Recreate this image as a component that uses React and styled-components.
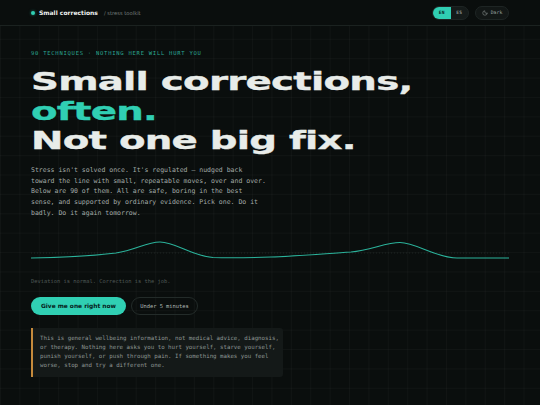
import React from 'react';
import styled, { createGlobalStyle } from 'styled-components';
import { Moon } from 'lucide-react';

const TEAL = '#30cfb3';
const MONO = '"DejaVu Sans Mono", "Liberation Mono", monospace';
const SANS = '"DejaVu Sans", "Noto Sans", sans-serif';

const GlobalStyle = createGlobalStyle`
  html, body {
    margin: 0;
    padding: 0;
    background: #0a0e0d;
  }
  #root {
    height: 405px;
    overflow: hidden;
  }
`;

const Page = styled.div`
  height: 405px;
  background-color: #0a0e0d;
  background-image:
    linear-gradient(rgba(255, 255, 255, 0.028) 1px, transparent 1px),
    linear-gradient(90deg, rgba(255, 255, 255, 0.028) 1px, transparent 1px);
  background-size: 19.4px 19.4px;
  color: #e8ece9;
`;

const Header = styled.header`
  height: 26px;
  box-sizing: border-box;
  border-bottom: 1px solid #1b2220;
  background: #0a0e0d;
  display: flex;
  align-items: center;
  justify-content: space-between;
  padding: 0 31px;
`;

const Brand = styled.div`
  display: flex;
  align-items: center;
  gap: 4px;
`;

const Dot = styled.span`
  width: 4px;
  height: 4px;
  border-radius: 50%;
  background: ${TEAL};
  box-shadow: 0 0 3px rgba(48, 207, 179, 0.6);
`;

const BrandName = styled.span`
  font-family: ${SANS};
  font-weight: 700;
  font-size: 6px;
  color: #eef2f0;
  margin-right: 2px;
`;

const BrandSub = styled.span`
  font-family: ${SANS};
  font-size: 5.2px;
  color: #737c79;
`;

const Controls = styled.div`
  display: flex;
  align-items: center;
  gap: 6px;
`;

const Toggle = styled.div`
  display: flex;
  height: 14px;
  border-radius: 7px;
  background: #151b1a;
  border: 1px solid #1e2524;
  box-sizing: border-box;
  overflow: hidden;
`;

const LangButton = styled.span`
  width: 17.5px;
  display: flex;
  align-items: center;
  justify-content: center;
  font-family: ${MONO};
  font-weight: 700;
  font-size: 4.6px;
  letter-spacing: 0.3px;
  color: ${p => (p.$active ? '#06201b' : '#8a9390')};
  background: ${p => (p.$active ? TEAL : 'transparent')};
`;

const ThemeButton = styled.span`
  height: 14px;
  width: 34px;
  box-sizing: border-box;
  border-radius: 7px;
  border: 1px solid #1e2524;
  background: #121716;
  display: flex;
  align-items: center;
  justify-content: center;
  gap: 3px;
  font-family: ${MONO};
  font-size: 4.8px;
  color: #9aa3a0;
`;

const Main = styled.main`
  padding: 23px 31px 0;
`;

const Eyebrow = styled.div`
  font-family: ${MONO};
  font-size: 5.5px;
  line-height: 8px;
  letter-spacing: 0.75px;
  color: #2aa892;
  text-transform: uppercase;
`;

const Headline = styled.h1`
  margin: 10px 0 0;
  font-family: ${SANS};
  font-weight: 700;
  font-size: 25px;
  line-height: 29.5px;
  letter-spacing: -0.5px;
  color: #e8ece9;
  -webkit-text-stroke: 0.35px currentColor;
  transform: scaleX(1.55);
  transform-origin: left top;
  white-space: nowrap;
`;

const Line = styled.span`
  display: block;
  color: ${p => (p.$accent ? TEAL : 'inherit')};
`;

const Lead = styled.p`
  margin: 9.5px 0 0;
  max-width: 60.5ch;
  font-family: ${MONO};
  font-size: 6.5px;
  line-height: 10.7px;
  color: #a2aaa7;
`;

const Wave = styled.svg`
  display: block;
  margin-top: 15px;
  width: 478px;
  height: 28px;
`;

const Caption = styled.div`
  margin-top: 15px;
  font-family: ${MONO};
  font-size: 5.4px;
  line-height: 8px;
  color: #4f5856;
`;

const Actions = styled.div`
  display: flex;
  gap: 5px;
  margin-top: 12px;
`;

const PrimaryButton = styled.button`
  height: 18px;
  width: 95px;
  border: none;
  border-radius: 9px;
  background: ${TEAL};
  color: #06201b;
  font-family: ${SANS};
  font-weight: 700;
  font-size: 5.9px;
  padding: 0;
  cursor: pointer;
`;

const GhostButton = styled.button`
  height: 18px;
  width: 67px;
  box-sizing: border-box;
  border: 1px solid #232b29;
  border-radius: 9px;
  background: transparent;
  color: #b0b8b5;
  font-family: ${MONO};
  font-size: 5.4px;
  padding: 0;
  cursor: pointer;
`;

const Notice = styled.div`
  margin-top: 13px;
  width: fit-content;
  box-sizing: border-box;
  border-left: 2px solid #c58a3c;
  border-radius: 0 3px 3px 0;
  background: #141918;
  padding: 6px 1px 6px 7px;
`;

const NoticeText = styled.p`
  margin: 0;
  width: 70ch;
  font-family: ${MONO};
  font-size: 5.75px;
  line-height: 9.3px;
  color: #8e9794;
`;

export default function App() {
  return (
    <Page>
      <GlobalStyle />
      <Header>
        <Brand>
          <Dot />
          <BrandName>Small corrections</BrandName>
          <BrandSub>/ stress toolkit</BrandSub>
        </Brand>
        <Controls>
          <Toggle>
            <LangButton $active>EN</LangButton>
            <LangButton>ES</LangButton>
          </Toggle>
          <ThemeButton>
            <Moon size={6} strokeWidth={2} />
            Dark
          </ThemeButton>
        </Controls>
      </Header>
      <Main>
        <Eyebrow>90 techniques · nothing here will hurt you</Eyebrow>
        <Headline>
          <Line>Small corrections,</Line>
          <Line $accent>often.</Line>
          <Line>Not one big fix.</Line>
        </Headline>
        <Lead>
          Stress isn't solved once. It's regulated — nudged back toward the line with small,
          repeatable moves, over and over. Below are 90 of them. All are safe, boring in the best
          sense, and supported by ordinary evidence. Pick one. Do it badly. Do it again tomorrow.
        </Lead>
        <Wave viewBox="0 0 478 28" preserveAspectRatio="none">
          <line x1="0" y1="19" x2="478" y2="19" stroke="#2a3331" strokeWidth="0.6" strokeDasharray="1 2" />
          <path
            d="M0,24 C30,23.5 60,22 85,19 C105,16 115,8 129,8 C145,8 160,22 182,23.5 C200,24 225,23.5 240,23 C260,22.5 290,20 320,18 C340,16 355,8.5 369,8.5 C385,8.5 405,24 426,24 L478,24"
            fill="none"
            stroke="#2bb39b"
            strokeWidth="1.1"
            strokeLinecap="round"
          />
        </Wave>
        <Caption>Deviation is normal. Correction is the job.</Caption>
        <Actions>
          <PrimaryButton>Give me one right now</PrimaryButton>
          <GhostButton>Under 5 minutes</GhostButton>
        </Actions>
        <Notice>
          <NoticeText>
            This is general wellbeing information, not medical advice, diagnosis, or therapy.
            Nothing here asks you to hurt yourself, starve yourself, punish yourself, or push
            through pain. If something makes you feel worse, stop and try a different one.
          </NoticeText>
        </Notice>
      </Main>
    </Page>
  );
}
